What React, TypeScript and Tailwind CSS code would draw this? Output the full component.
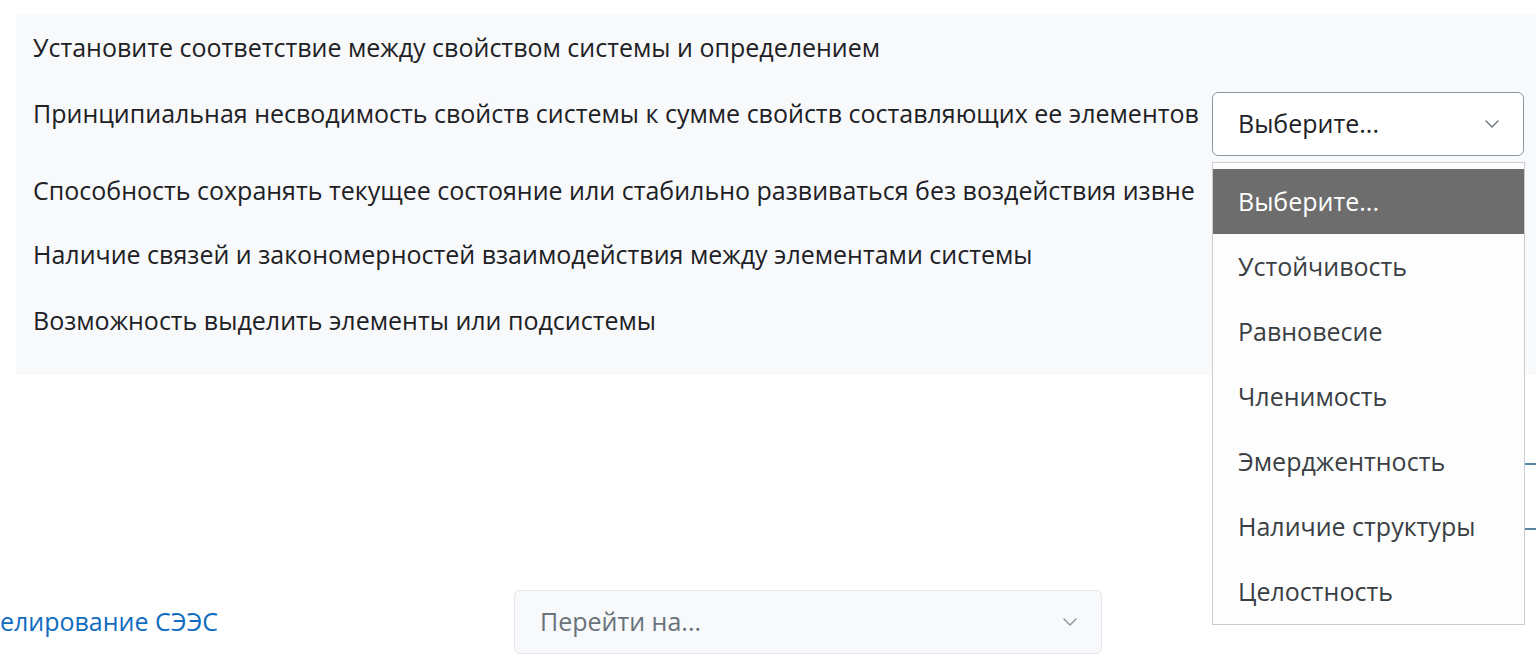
import React from 'react';

const rows = [
  'Способность сохранять текущее состояние или стабильно развиваться без воздействия извне',
  'Наличие связей и закономерностей взаимодействия между элементами системы',
  'Возможность выделить элементы или подсистемы',
];

const options = [
  'Выберите...',
  'Устойчивость',
  'Равновесие',
  'Членимость',
  'Эмерджентность',
  'Наличие структуры',
  'Целостность',
];

const Chevron = ({ className }: { className?: string }) => (
  <svg className={className} width="14" height="8" viewBox="0 0 14 8" fill="none">
    <path d="M1 1l6 6 6-6" stroke="currentColor" strokeWidth="1.4" strokeLinecap="round" strokeLinejoin="round" />
  </svg>
);

export default function App() {
  return (
    <div className="relative w-[1536px] h-[665px] overflow-hidden bg-white font-['Open_Sans',sans-serif] text-[25px] text-[#1d2125]">
      {/* вопрос на соответствие */}
      <div className="mt-[14px] ml-[16px] h-[361px] bg-[#f8f9fa] px-[17px] pt-[18px]">
        <div className="leading-[30px]">Установите соответствие между свойством системы и определением</div>
        <div className="mt-[30px] grid grid-cols-[1179px_312px]">
          <div className="mt-[6px] leading-[30px] whitespace-nowrap">
            Принципиальная несводимость свойств системы к сумме свойств составляющих ее элементов
          </div>
          <div className="flex h-[64px] items-center justify-between rounded-[6px] border border-[#8f959e] bg-white pl-[25px] pr-[24px]">
            <span>Выберите...</span>
            <Chevron className="text-[#6a737b]" />
          </div>
        </div>
        <div className="mt-[19px] leading-[30px] whitespace-nowrap">{rows[0]}</div>
        <div className="mt-[34px] leading-[30px]">{rows[1]}</div>
        <div className="mt-[36px] leading-[30px]">{rows[2]}</div>
      </div>

      {/* навигация */}
      <div className="mt-[215px] grid grid-cols-[514px_588px] items-center">
        <div className="overflow-hidden whitespace-nowrap">
          <span className="-ml-[52px] inline-block text-[#0f6cbf]">Моделирование СЭЭС</span>
        </div>
        <div className="flex h-[64px] items-center justify-between rounded-[6px] border border-[#e3e6ea] bg-[#f8f9fa] pl-[25px] pr-[24px] text-[#6a737b]">
          <span>Перейти на...</span>
          <Chevron className="text-[#8a9299]" />
        </div>
      </div>

      {/* кнопка справа, под списком */}
      <div className="absolute left-[1525px] top-[463px] h-[67px] w-[20px] border-y-2 border-[#5b86a3]" />

      {/* открытый список */}
      <div className="absolute left-[1212px] top-[162px] w-[313px] border border-[#c9cdd1] bg-[#fdfdfd] pt-[6px] pb-[0px]">
        {options.map((o, i) => (
          <div
            key={o}
            className={`flex h-[65px] items-center pl-[25px] ${i === 0 ? 'bg-[#6d6d6d] text-white' : 'text-[#3a3f44]'}`}
          >
            {o}
          </div>
        ))}
      </div>
    </div>
  );
}
